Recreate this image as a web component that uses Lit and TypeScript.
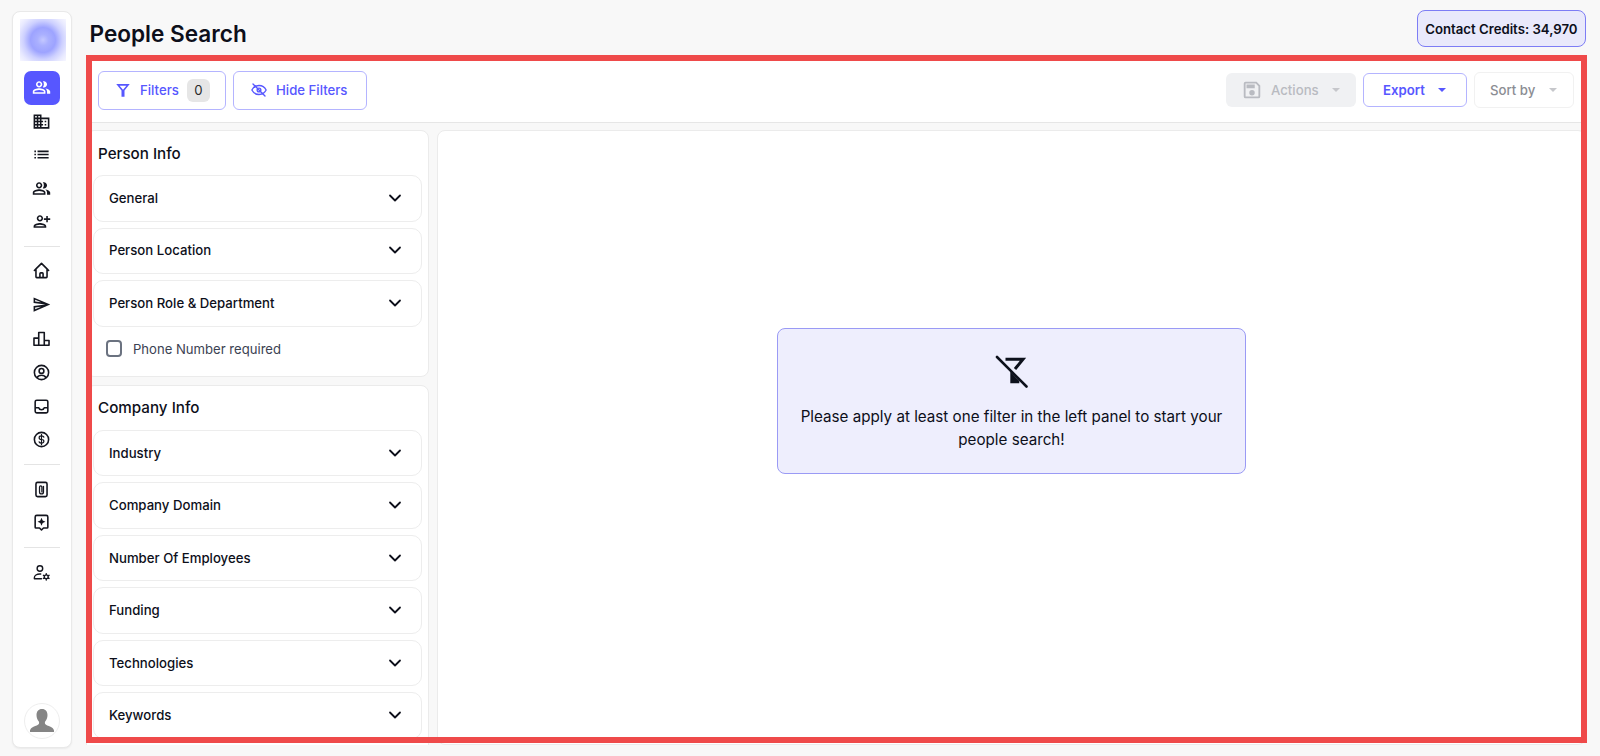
import { LitElement, html, css, svg } from "lit";
import { customElement } from "lit/decorators.js";

const F = (d: string) => svg`<path d=${d} fill="currentColor"></path>`;
const S = (d: string, w = 2) => svg`<path d=${d} fill="none" stroke="currentColor" stroke-width=${w} stroke-linecap="round" stroke-linejoin="round"></path>`;

const peopleAlt = F("M16.67 13.13C18.04 14.06 19 15.32 19 17v3h4v-3c0-2.18-3.57-3.47-6.33-3.87z M15 12c2.21 0 4-1.79 4-4s-1.79-4-4-4c-.47 0-.91.1-1.33.24C14.5 5.27 15 6.58 15 8s-.5 2.73-1.33 3.76c.42.14.86.24 1.33.24z M9 12c2.21 0 4-1.79 4-4s-1.79-4-4-4-4 1.79-4 4 1.79 4 4 4zm0-6c1.1 0 2 .9 2 2s-.9 2-2 2-2-.9-2-2 .9-2 2-2z M9 13c-2.67 0-8 1.34-8 4v3h16v-3c0-2.66-5.33-4-8-4zm6 5H3v-.99C3.2 16.29 6.3 15 9 15s5.8 1.29 6 2z");

const navGroups = [
  {
    cls: "g1",
    items: [
      { icon: peopleAlt, active: true },
      { icon: F("M12 7V3H2v18h20V7H12zM6 19H4v-2h2v2zm0-4H4v-2h2v2zm0-4H4V9h2v2zm0-4H4V5h2v2zm4 12H8v-2h2v2zm0-4H8v-2h2v2zm0-4H8V9h2v2zm0-4H8V5h2v2zm10 12h-8v-2h2v-2h-2v-2h2v-2h-2V9h8v10zm-2-8h-2v2h2v-2zm0 4h-2v2h2v-2z") },
      { icon: F("M3 13h2v-2H3v2zm0 4h2v-2H3v2zm0-8h2V7H3v2zm4 4h14v-2H7v2zm0 4h14v-2H7v2zM7 7v2h14V7H7z") },
      { icon: peopleAlt },
      { icon: F("M10 12c2.21 0 4-1.79 4-4s-1.79-4-4-4-4 1.79-4 4 1.79 4 4 4zm0-6c1.1 0 2 .9 2 2s-.9 2-2 2-2-.9-2-2 .9-2 2-2z M10 14c-2.67 0-8 1.34-8 4v2h16v-2c0-2.66-5.33-4-8-4zm-6 4c.22-.72 3.31-2 6-2 2.7 0 5.8 1.29 6 2H4z M20 13v-3h3V8h-3V5h-2v3h-3v2h3v3z") },
    ],
  },
  {
    cls: "g2",
    items: [
      { icon: S("M3 12l2-2m0 0l7-7 7 7M5 10v10a1 1 0 0 0 1 1h3m10-11l2 2m-2-2v10a1 1 0 0 1-1 1h-3m-6 0a1 1 0 0 0 1-1v-4a1 1 0 0 1 1-1h2a1 1 0 0 1 1 1v4a1 1 0 0 0 1 1m-6 0h6") },
      { icon: F("M4.010 6.030l7.510 3.220-7.520-1 .01-2.220m7.500 8.720L4 17.970v-2.220l7.510-1M2.010 3L2 10l15 2-15 2 .01 7L23 12 2.010 3z") },
      { icon: S("M2.500 20.500v-9h6v-7h7v10h6v6z M8.500 11.500v9 M15.500 14.500v6") },
      { icon: svg`${S("M3 12a9 9 0 1 0 18 0a9 9 0 1 0-18 0z")}${S("M9 10a3 3 0 1 0 6 0a3 3 0 1 0-6 0z")}${S("M6.500 18.500c1-2 3-3 5.500-3s4.500 1 5.500 3")}` },
      { icon: S("M4 6a2 2 0 0 1 2-2h12a2 2 0 0 1 2 2v12a2 2 0 0 1-2 2H6a2 2 0 0 1-2-2z M4 13.500h4.500c.5 1.700 1.800 2.500 3.500 2.500s3-.8 3.500-2.500H20") },
      { icon: svg`${S("M3 12a9 9 0 1 0 18 0a9 9 0 1 0-18 0z")}${S("M15 9c-.5-1-1.500-1.500-3-1.500-2 0-3 1-3 2.250S10 12 12 12s3 1 3 2.250-1 2.250-3 2.250c-1.500 0-2.500-.5-3-1.500 M12 5.500v13", 1.5)}` },
    ],
  },
  {
    cls: "g3",
    items: [
      { icon: svg`${S("M5 5a2 2 0 0 1 2-2h10a2 2 0 0 1 2 2v14a2 2 0 0 1-2 2H7a2 2 0 0 1-2-2z")}${S("M14.500 8v7a2.500 2.500 0 0 1-5 0V9a1.500 1.500 0 0 1 3 0v6", 1.6)}` },
      { icon: svg`${S("M4 5a2 2 0 0 1 2-2h12a2 2 0 0 1 2 2v13a1 1 0 0 1-1 1h-4.500L12 21.500 9.500 19H5a1 1 0 0 1-1-1z")}${F("M12 6l1.500 3.500 3.500 1.500-3.500 1.500-1.500 3.500-1.500-3.500L7 11l3.500-1.500z")}` },
    ],
  },
  {
    cls: "g4",
    items: [
      { icon: svg`${S("M6.500 7a3.500 3.500 0 1 0 7 0a3.500 3.500 0 1 0-7 0z", 1.8)}${S("M3 20v-1.500c0-2.500 3-4.500 7-4.500h1 M3 20h9", 1.8)}${S("M15.500 17.500a2.500 2.500 0 1 0 5 0a2.500 2.500 0 1 0-5 0z M18 13.500v1.500 M18 20v1.500 M14.500 15.500l1.300.8 M20.200 18.700l1.300.8 M14.500 19.500l1.300-.8 M20.200 16.300l1.300-.8", 1.8)}` },
    ],
  },
];

const personItems = ["General", "Person Location", "Person Role & Department"];
const companyItems = ["Industry", "Company Domain", "Number Of Employees", "Funding", "Technologies", "Keywords", ""];

@customElement("app-root")
export class AppRoot extends LitElement {
  static styles = css`
    :host {
      display: flex;
      align-items: flex-start;
      position: relative;
      width: 1600px;
      height: 756px;
      overflow: hidden;
      background: #f8f8f8;
      font-family: Inter, "Liberation Sans", sans-serif;
      color: #0d0f1a;
    }
    .sidebar {
      width: 60px;
      height: 737px;
      flex: none;
      margin: 11px 14px 0 12px;
      box-sizing: border-box;
      background: #fff;
      border: 1px solid #e9e9e9;
      border-radius: 8px;
      box-shadow: 0 1px 2px rgba(0, 0, 0, 0.06);
      display: flex;
      flex-direction: column;
      align-items: center;
      padding: 7px 1px 0 0;
    }
    .logo {
      width: 46px;
      height: 42px;
      flex: none;
      margin-left: 3px;
      margin-bottom: 10px;
      background: radial-gradient(circle at 50% 50%, #c4c8ff 0, #aab0ff 18%, #9da3ff 40%, #cdd0ff 62%, #e8e9ff 82%, #f7f7ff 100%);
    }
    .nav-group { display: flex; flex-direction: column; align-items: center; flex: none; }
    .nav-item {
      width: 36px;
      height: 33.800px;
      border-radius: 7px;
      display: flex;
      align-items: center;
      justify-content: center;
      color: #14161f;
    }
    .g1 .nav-item { height: 33.500px; }
    .nav-item svg { width: 19px; height: 19px; }
    .nav-item.active { background: #5757ff; color: #fff; }
    .nav-divider { width: 36px; height: 1px; background: #e4e4e4; margin: 7.500px 0 7px; flex: none; }
    .avatar {
      margin-top: auto;
      margin-bottom: 8px;
      width: 36px;
      height: 36px;
      flex: none;
      box-sizing: border-box;
      border-radius: 50%;
      border: 1px solid #eee;
      display: flex;
      align-items: center;
      justify-content: center;
      overflow: hidden;
    }
    .main { width: 1501px; height: 690px; flex: none; display: flex; flex-direction: column; }
    .header { height: 55px; flex: none; display: flex; justify-content: space-between; box-sizing: border-box; }
    h1 { margin: 18.500px 0 0 3.500px; font-size: 22.600px; line-height: 30px; font-weight: 600; }
    .credits {
      margin-top: 10px;
      margin-right: 1px;
      height: 37px;
      box-sizing: border-box;
      padding: 0 7.500px;
      display: flex;
      align-items: center;
      background: #e9e9fb;
      border: 1px solid #7d7df5;
      border-radius: 8px;
      font-size: 13.200px;
      font-weight: 600;
    }
    .toolbar {
      height: 68px;
      box-sizing: border-box;
      flex: none;
      background: #fff;
      border-bottom: 1px solid #e6e6e6;
      padding: 16px 13px 0 12px;
      display: flex;
      justify-content: space-between;
      align-items: flex-start;
    }
    .tools { display: flex; align-items: center; gap: 7px; }
    .tools.right { height: 38px; }
    .btn {
      box-sizing: border-box;
      display: flex;
      align-items: center;
      border-radius: 6px;
      font-size: 13.200px;
      font-weight: 500;
    }
    .primary { border: 1px solid #b4b4ff; color: #5757ff; background: #fff; }
    .filters { width: 128px; height: 39px; padding: 0 0 1px 15px; }
    .hide { width: 134px; height: 39px; padding: 0 0 1px 16px; }
    .btn svg.ic { width: 18px; height: 18px; margin-right: 8px; flex: none; }
    .count {
      margin-left: 8px;
      width: 23px;
      height: 23px;
      border-radius: 6px;
      background: #e6e6e6;
      color: #2a2a2a;
      display: flex;
      align-items: center;
      justify-content: center;
      font-weight: 400;
    }
    .actions { width: 130px; height: 34px; padding-left: 15px; background: #f0f1f3; color: #b9bbc1; }
    .btn.actions svg.ic { width: 22px; height: 22px; margin-right: 8px; }
    .export { width: 104px; height: 34px; padding-left: 19px; font-weight: 600; }
    .sort { width: 100px; height: 36px; padding-left: 15px; border: 1px solid #f1f1f1; color: #8b8d93; }
    .caret { width: 0; height: 0; border-left: 4px solid transparent; border-right: 4px solid transparent; border-top: 4px solid currentColor; margin-left: 13px; }
    .sort .caret { color: #c6c7cb; margin-left: 14px; }
    .actions .caret { color: #c6c7cb; margin-left: 13px; }
    .body {
      height: 622px;
      flex: none;
      display: flex;
      gap: 8px;
      padding-top: 7px;
      box-sizing: border-box;
      overflow: hidden;
    }
    .left { width: 343px; flex: none; display: flex; flex-direction: column; gap: 8px; }
    .card {
      background: #fff;
      border: 1px solid #ebebeb;
      border-radius: 8px;
      box-sizing: border-box;
      padding: 11.500px 6px 0 6px;
      flex: none;
    }
    .card.person { height: 246.500px; }
    h2 { margin: 0 0 10.500px 5px; font-size: 15.200px; line-height: 22px; font-weight: 550; }
    .items { display: flex; flex-direction: column; gap: 6px; }
    .item {
      height: 46.500px;
      box-sizing: border-box;
      flex: none;
      border: 1px solid #ededed;
      border-radius: 10px;
      padding: 0 19px 1px 15px;
      display: flex;
      align-items: center;
      justify-content: space-between;
      font-size: 13.200px;
      font-weight: 550;
    }
    .company .item { padding-bottom: 0; }
    .item svg { width: 14px; height: 14px; color: #0d0f1a; }
    .check { display: flex; align-items: center; gap: 11px; margin: 13px 0 0 12.500px; font-size: 13.100px; color: #3b4252; line-height: 18px; }
    .box { width: 16.500px; height: 16.500px; box-sizing: border-box; border: 2px solid #6b7280; border-radius: 4px; }
    .results {
      flex: 1;
      margin-right: 1px;
      background: #fff;
      border: 1px solid #ebebeb;
      border-radius: 8px;
      box-sizing: border-box;
      display: flex;
      justify-content: center;
      align-items: flex-start;
      padding-top: 196.500px;
    }
    .empty {
      width: 469px;
      height: 146px;
      box-sizing: border-box;
      background: #eeeefd;
      border: 1px solid #9a9af5;
      border-radius: 8px;
      display: flex;
      flex-direction: column;
      align-items: center;
      padding: 26px 20px 0;
      text-align: center;
      font-size: 15.200px;
      line-height: 23px;
    }
    .empty svg { width: 33px; height: 33px; margin-bottom: 17px; flex: none; color: #0d111c; }
    .frame {
      position: absolute;
      left: 86px;
      top: 55px;
      width: 1501px;
      height: 688px;
      box-sizing: border-box;
      border: 6px solid #ef4a4a;
      pointer-events: none;
    }
  `;

  private chevron() {
    return html`<svg viewBox="0 0 14 14"><path d="M2 4.500 7 9.500l5-5" fill="none" stroke="currentColor" stroke-width="1.800" stroke-linecap="round" stroke-linejoin="round"></path></svg>`;
  }

  private accordion(items: string[]) {
    return html`<div class="items">${items.map((t) => html`<div class="item"><span>${t}</span>${t ? this.chevron() : ""}</div>`)}</div>`;
  }

  render() {
    return html`
      <aside class="sidebar">
        <div class="logo"></div>
        ${navGroups.map((g, i) => html`
          ${i ? html`<div class="nav-divider"></div>` : ""}
          <div class="nav-group ${g.cls}">
            ${g.items.map((n: any) => html`<div class="nav-item ${n.active ? "active" : ""}"><svg viewBox="0 0 24 24">${n.icon}</svg></div>`)}
          </div>`)}
        <div class="avatar">
          <svg width="30" height="30" viewBox="0 0 30 30"><path fill="#858585" d="M15 3c-3.600 0-5.500 2.600-5.500 6 0 2.600 1 5 2.300 6.500.4.500.4 1.800 0 2.500-.7 1.200-3 1.800-5.300 2.800-2 .9-3 2-3.500 3.700v1.500h24v-1.500c-.5-1.700-1.500-2.800-3.500-3.700-2.300-1-4.600-1.600-5.300-2.800-.4-.7-.4-2 0-2.500 1.300-1.500 2.300-3.900 2.300-6.500 0-3.400-1.900-6-5.500-6z"></path></svg>
        </div>
      </aside>
      <div class="main">
        <header class="header">
          <h1>People Search</h1>
          <div class="credits">Contact Credits: 34,970</div>
        </header>
        <div class="toolbar">
          <div class="tools">
            <div class="btn primary filters">
              <svg class="ic" viewBox="0 0 24 24"><path fill="currentColor" fill-rule="evenodd" d="M3 4h18l-7 8.500V21h-4v-8.500z M7.500 6.200h9L12 11.500z"></path></svg>
              Filters<span class="count">0</span>
            </div>
            <div class="btn primary hide">
              <svg class="ic" viewBox="0 0 24 24"><path d="M2.500 12C4.500 8 8 6 12 6s7.500 2 9.500 6c-2 4-5.500 6-9.500 6s-7.500-2-9.500-6z M9.500 12a2.500 2.500 0 0 0 5 0a2.500 2.500 0 0 0-5 0z M4 4l16 16" fill="none" stroke="currentColor" stroke-width="1.800" stroke-linecap="round" stroke-linejoin="round"></path></svg>
              Hide Filters
            </div>
          </div>
          <div class="tools right">
            <div class="btn actions">
              <svg class="ic" viewBox="0 0 24 24"><path fill="currentColor" d="M17 3H5a2 2 0 0 0-2 2v14a2 2 0 0 0 2 2h14a2 2 0 0 0 2-2V7l-4-4zm2 16H5V5h11.170L19 7.830V19zm-7-7a3 3 0 1 0 0 6 3 3 0 0 0 0-6zM6 6h9v4H6z"></path></svg>
              Actions<span class="caret"></span>
            </div>
            <div class="btn primary export">Export<span class="caret"></span></div>
            <div class="btn sort">Sort by<span class="caret"></span></div>
          </div>
        </div>
        <div class="body">
          <div class="left">
            <section class="card person">
              <h2>Person Info</h2>
              ${this.accordion(personItems)}
              <label class="check"><span class="box"></span>Phone Number required</label>
            </section>
            <section class="card company">
              <h2>Company Info</h2>
              ${this.accordion(companyItems)}
            </section>
          </div>
          <div class="results">
            <div class="empty">
              <svg viewBox="0 0 33 33">
                <path d="M10.500 4.200H28L20 14" fill="none" stroke="currentColor" stroke-width="3" stroke-linejoin="miter"></path>
                <path d="M15.300 16.500 24.300 26v2.300h-9z" fill="currentColor"></path>
                <path d="M2 2l29.500 29.500" fill="none" stroke="currentColor" stroke-width="2.600" stroke-linecap="round"></path>
              </svg>
              Please apply at least one filter in the left panel to start your people search!
            </div>
          </div>
        </div>
      </div>
      <div class="frame"></div>
    `;
  }
}
